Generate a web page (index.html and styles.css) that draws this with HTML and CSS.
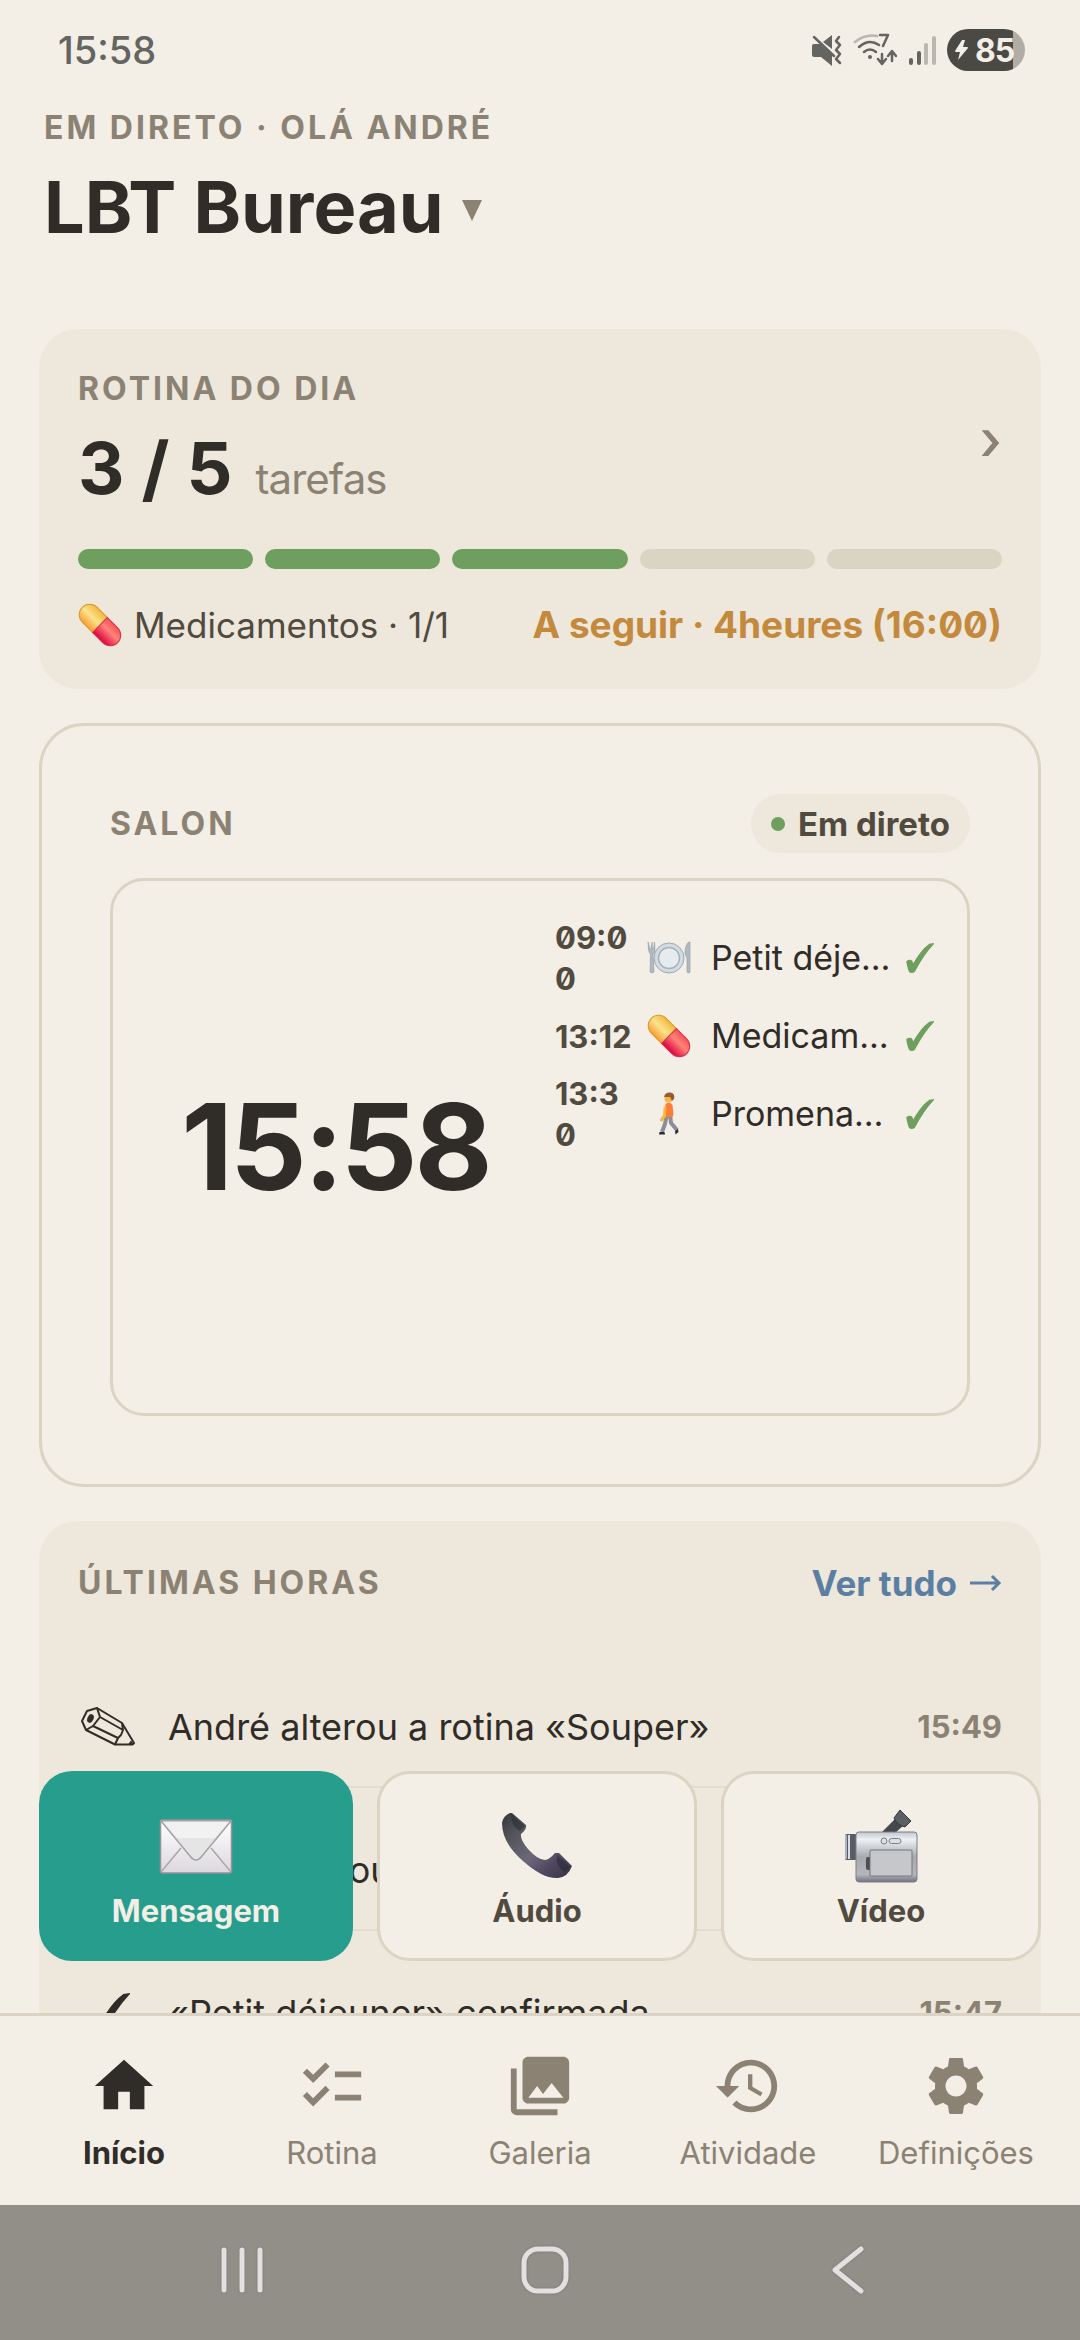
FILE: index.html
```html
<!DOCTYPE html>
<html lang="pt">
<head>
    <meta charset="UTF-8">
    <meta name="viewport" content="width=device-width, initial-scale=1.0">
    <title>LBT Bureau</title>
    <link rel="stylesheet" href="styles.css">
</head>
<body>
    <!-- Shared icons -->
    <svg class="defs" width="0" height="0" aria-hidden="true">
        <defs>
            <linearGradient id="pillYellow" x1="0" y1="0" x2="0" y2="1">
                <stop offset="0" stop-color="#f0b93a"/>
                <stop offset="0.5" stop-color="#fbe38c"/>
                <stop offset="1" stop-color="#fb9d35"/>
            </linearGradient>
            <linearGradient id="pillRed" x1="0" y1="0" x2="0" y2="1">
                <stop offset="0" stop-color="#f5555a"/>
                <stop offset="0.4" stop-color="#ff8378"/>
                <stop offset="1" stop-color="#dc0040"/>
            </linearGradient>
            <linearGradient id="metal" x1="0" y1="0" x2="0" y2="1">
                <stop offset="0" stop-color="#c3c6ca"/>
                <stop offset="0.15" stop-color="#eef1f4"/>
                <stop offset="0.5" stop-color="#a6a9ad"/>
                <stop offset="0.85" stop-color="#b4b6bb"/>
                <stop offset="1" stop-color="#70727e"/>
            </linearGradient>
            <linearGradient id="paper" x1="0" y1="0" x2="0" y2="1">
                <stop offset="0" stop-color="#ffffff"/>
                <stop offset="1" stop-color="#dcd8de"/>
            </linearGradient>
            <linearGradient id="handset" x1="0" y1="0" x2="1" y2="1">
                <stop offset="0" stop-color="#33373a"/>
                <stop offset="0.25" stop-color="#54565b"/>
                <stop offset="0.55" stop-color="#6b6778"/>
                <stop offset="0.75" stop-color="#514762"/>
                <stop offset="1" stop-color="#33343f"/>
            </linearGradient>
            <radialGradient id="plate">
                <stop offset="0" stop-color="#f1f4f6"/>
                <stop offset="1" stop-color="#cfd7dd"/>
            </radialGradient>
            <symbol id="pill" viewBox="0 0 44 44">
                <g transform="rotate(45 22 22)">
                    <path d="M22 11.500H7.500a10.500 10.500 0 0 0 0 21H22z" fill="url(#pillYellow)" stroke="#d99a2c" stroke-width="1"/>
                    <path d="M22 11.500h14.500a10.500 10.500 0 0 1 0 21H22z" fill="url(#pillRed)" stroke="#d9304a" stroke-width="1"/>
                </g>
            </symbol>
            <symbol id="check" viewBox="0 0 28 30">
                <path d="M1 18.500c2-1.500 4.500-1.200 5 .5l.8 3.500C11.500 14 17 6 23.500 1.500L27 1C19 9.500 13.500 18.500 8.500 28c-1 1.500-3.800 1.500-4.800.5C2.500 26 1.700 22.500 1 18.500z" fill="currentColor" stroke="currentColor" stroke-width="1.500"/>
            </symbol>
            <symbol id="pencil" viewBox="0 0 54 40">
                <g fill="none" stroke="currentColor" stroke-width="2" stroke-linejoin="round">
                    <path d="M6 4l10-3 25 15 12 20-1.500 1.500H34L5 23 1 14z"/>
                    <path d="M16 1l3 9-7 9-7 4M19 10l23 13M12 19l25 12-3 6.500M41 16l1 7-2 5-3 3"/>
                </g>
                <ellipse cx="9.500" cy="11.500" rx="3" ry="4.500" transform="rotate(25 9.500 11.500)" fill="currentColor"/>
                <path d="M53 37.500h-6l3-4z" fill="currentColor"/>
            </symbol>
        </defs>
    </svg>

    <div class="status-bar">
        <span class="status-time">15:58</span>
        <div class="status-icons">
            <svg width="32" height="32" viewBox="0 0 32 32">
                <path d="M1 12q0-2 2-2h6L21 21v11L10 23H3q-2 0-2-2zM12 8l9-7v14z" fill="#646460"/>
                <path d="M3 3l20 19" stroke="#646460" stroke-width="2.500" stroke-linecap="round"/>
                <path d="M28 3l-3 4 4 4-4 5 4 4-4 5 4 4" fill="none" stroke="#646460" stroke-width="2.500" stroke-linecap="round" stroke-linejoin="round"/>
            </svg>
            <svg width="44" height="34" viewBox="0 0 44 34">
                <g fill="none" stroke-width="2.500" stroke-linecap="round">
                    <path d="M2 9Q12 1 24 3" stroke="#b9b6af"/>
                    <path d="M6 14q10-9 20-2M11 19q6-5 12 0" stroke="#646460"/>
                    <path d="M27 2h8l-5 11M29 21v9m-4-4l4 5 4-5M39 28v-9m-4 4l4-5 4 5" stroke="#646460" stroke-linejoin="round"/>
                </g>
                <circle cx="17" cy="24" r="2" fill="#646460"/>
            </svg>
            <svg width="30" height="32" viewBox="0 0 30 32">
                <g stroke-width="4" stroke-linecap="round">
                    <path d="M4 26v3M12 19v10" stroke="#646460"/>
                    <path d="M19 11v18M27 4v25" stroke="#bab7b0"/>
                </g>
            </svg>
            <div class="battery">
                <svg width="16" height="22" viewBox="0 0 16 22"><path d="M8 1L1 12q0 1 1 1h4L4 21 14 9q0-1-1-1H9l2-7z" fill="#f3eee6"/></svg>
                <span>85</span>
            </div>
        </div>
    </div>

    <header class="page-header">
        <p class="eyebrow">EM DIRETO · OLÁ ANDRÉ</p>
        <button class="title-button">
            <h1>LBT Bureau</h1>
            <svg width="20" height="27" viewBox="0 0 20 27"><path d="M0 6h20L10 27z" fill="currentColor"/></svg>
        </button>
    </header>

    <main class="content">
        <section class="card routine">
            <div class="routine-head">
                <div>
                    <h2 class="eyebrow">ROTINA DO DIA</h2>
                    <p class="count">3 / 5 <span>tarefas</span></p>
                </div>
                <button class="chevron" aria-label="Abrir rotina">›</button>
            </div>
            <div class="segments">
                <span class="done"></span>
                <span class="done"></span>
                <span class="done"></span>
                <span></span>
                <span></span>
            </div>
            <div class="routine-meta">
                <span class="meds"><svg width="44" height="44"><use href="#pill"/></svg>Medicamentos · 1/1</span>
                <strong>A seguir · 4heures (16:00)</strong>
            </div>
        </section>

        <section class="room">
            <div class="room-head">
                <h2 class="eyebrow">SALON</h2>
                <span class="live">Em direto</span>
            </div>
            <div class="screen">
                <div class="clock">15:58</div>
                <ul class="tasks">
                    <li>
                        <time>09:00</time>
                        <svg width="44" height="44" viewBox="0 0 44 44">
                            <g fill="#aeb9c2" stroke="#8f9ca7" stroke-width="0.6">
                                <path d="M1 6l.5 8q.5 3 2 4L3 36q2 2 4 0L6 18q2-1 2-4L7.500 6l-1 7H5.500L5 6 4 13H3z"/>
                                <path d="M42 6q-4 2-4 12l2 4v14q2 2 3 0V6z"/>
                            </g>
                            <circle cx="22" cy="22" r="15" fill="url(#plate)" stroke="#9dabb5" stroke-width="1"/>
                            <circle cx="22" cy="22" r="10.500" fill="#e6ebee" stroke="#a6b3bd" stroke-width="1.500"/>
                        </svg>
                        <span class="task-name">Petit déje…</span>
                        <svg class="tick" width="28" height="30"><use href="#check"/></svg>
                    </li>
                    <li>
                        <time>13:12</time>
                        <svg width="44" height="44"><use href="#pill"/></svg>
                        <span class="task-name">Medicam…</span>
                        <svg class="tick" width="28" height="30"><use href="#check"/></svg>
                    </li>
                    <li>
                        <time>13:30</time>
                        <svg width="44" height="44" viewBox="0 0 44 44">
                            <path d="M20 22l-2 10-3 8M23 22l1 9 6 7" fill="none" stroke="#8b8d98" stroke-width="4"/>
                            <path d="M12.500 40h5l.5 2.500h-6zM28 39l3-2 .5 3-3 2.500z" fill="#2c2c30"/>
                            <path d="M18.500 12q4.500-3 7 1l1 9-1 3h-8z" fill="#fd7c38"/>
                            <path d="M18 16l-.5 8-3 4" fill="none" stroke="#f7b53b" stroke-width="3" stroke-linecap="round"/>
                            <circle cx="21.500" cy="6.500" r="4" fill="#f7b53b"/>
                            <path d="M17 5q1-5 6.500-4.500 5 1 3.500 6.500l-2 2-2-4z" fill="#9a5a33"/>
                        </svg>
                        <span class="task-name">Promena…</span>
                        <svg class="tick" width="28" height="30"><use href="#check"/></svg>
                    </li>
                </ul>
            </div>
        </section>

        <section class="card activity">
            <div class="activity-head">
                <h2 class="eyebrow">ÚLTIMAS HORAS</h2>
                <a href="#atividade">Ver tudo <svg width="32" height="18" viewBox="0 0 32 18"><path d="M0 9h29M22 2l7 7-7 7" fill="none" stroke="currentColor" stroke-width="3"/></svg></a>
            </div>
            <ul class="events">
                <li>
                    <svg width="62" height="40" viewBox="0 0 62 40"><use href="#pencil" x="3" width="54" height="40"/></svg>
                    <span>André alterou a rotina «Souper»</span>
                    <time>15:49</time>
                </li>
                <li>
                    <svg width="62" height="40" viewBox="0 0 62 40"><use href="#pencil" x="3" width="54" height="40"/></svg>
                    <span>Maria alterou a rotina</span>
                    <time>15:48</time>
                </li>
                <li>
                    <svg width="62" height="40" viewBox="0 0 62 40"><use href="#check" x="14" width="38" height="40"/></svg>
                    <span>«Petit déjeuner» confirmada</span>
                    <time>15:47</time>
                </li>
            </ul>
        </section>

        <!-- Quick actions float above the feed -->
        <div class="actions">
            <button class="action primary">
                <svg width="74" height="74" viewBox="0 0 74 74">
                    <rect x="1.500" y="11" width="71" height="53" rx="2" fill="url(#paper)" stroke="#96919a" stroke-width="1.500"/>
                    <path d="M2 63l20-24M72 63L52 39" stroke="#aaa6ad" stroke-width="1.500"/>
                    <path d="M2 12l29 35q6 8 12 0l29-35z" fill="#e6e5e6" stroke="#a5a2a7" stroke-width="1.500"/>
                    <path d="M4 12.500h66L56 29H18z" fill="#fff" opacity="0.5"/>
                </svg>
                Mensagem
            </button>
            <button class="action">
                <svg width="74" height="74" viewBox="0 0 74 74">
                    <path d="M2 14Q3 7 10 4l2 0 14 12q1 4-5 9-1 6 7 15 10 11 17 11 4 0 10-7l4 0 13 13q-4 11-14 12-15 1-35-17Q2 34 2 14z" fill="url(#handset)"/>
                    <path d="M11 5l14 12-5 5Q11 18 11 5zM57 46l13 12-5 5q-10-5-8-17z" fill="#24262c" opacity="0.5"/>
                </svg>
                Áudio
            </button>
            <button class="action">
                <svg width="74" height="74" viewBox="0 0 74 74">
                    <path d="M38 23l14-14 8 7-9 8z" fill="#45484c"/>
                    <path d="M50 9l6-8 11 11-6 6q-8-2-11-9z" fill="#5c5f64" stroke="#35373b" stroke-width="1"/>
                    <rect x="1" y="25" width="12" height="26" rx="1.500" fill="#595c62"/>
                    <path d="M1 26h2v24H1z" fill="#aab4c0"/>
                    <path d="M4 26h2v24H4z" fill="#d9dee3"/>
                    <rect x="12" y="23" width="61" height="50" rx="3" fill="url(#metal)" stroke="#7c7f87" stroke-width="1"/>
                    <circle cx="40" cy="32" r="3" fill="#dde0e3" stroke="#7c7f87" stroke-width="1"/>
                    <rect x="45" y="29.500" width="12" height="5" rx="2.500" fill="#dde0e3" stroke="#7c7f87" stroke-width="1"/>
                    <rect x="22" y="48" width="5" height="13" rx="2" fill="#4b4d52"/>
                    <rect x="26" y="41" width="42" height="26" rx="1" fill="#c6c7ca" stroke="#74767c" stroke-width="1"/>
                </svg>
                Vídeo
            </button>
        </div>
    </main>

    <nav class="tabs">
        <a href="#inicio" class="active">
            <svg viewBox="0 0 24 24"><path d="M10 20v-6h4v6h5v-8h3L12 3 2 12h3v8z"/></svg>
            Início
        </a>
        <a href="#rotina">
            <svg viewBox="0 0 24 24"><path d="M22 7h-9v2h9V7zm0 8h-9v2h9v-2zM5.540 11L2 7.460l1.410-1.410 2.120 2.120 4.240-4.240 1.410 1.410L5.540 11zm0 8L2 15.460l1.410-1.410 2.120 2.120 4.240-4.240 1.410 1.410L5.540 19z"/></svg>
            Rotina
        </a>
        <a href="#galeria">
            <svg viewBox="0 0 24 24"><path d="M22 16V4c0-1.100-.9-2-2-2H8c-1.100 0-2 .9-2 2v12c0 1.100.9 2 2 2h12c1.100 0 2-.9 2-2zm-11-4l2.030 2.710L16 11l4 5H8l3-4zM2 6v14c0 1.100.9 2 2 2h14v-2H4V6H2z"/></svg>
            Galeria
        </a>
        <a href="#atividade">
            <svg viewBox="0 0 24 24"><path d="M13 3c-4.970 0-9 4.030-9 9H1l3.890 3.890.07.14L9 12H6c0-3.870 3.130-7 7-7s7 3.130 7 7-3.130 7-7 7c-1.930 0-3.680-.79-4.940-2.060l-1.420 1.420C8.270 19.990 10.510 21 13 21c4.970 0 9-4.030 9-9s-4.030-9-9-9zm-1 5v5l4.280 2.540.72-1.210-3.500-2.080V8H12z"/></svg>
            Atividade
        </a>
        <a href="#definicoes">
            <svg viewBox="0 0 24 24"><path d="M19.140 12.940c.04-.3.060-.61.060-.94 0-.32-.02-.64-.07-.94l2.030-1.580c.18-.14.23-.41.12-.61l-1.920-3.320c-.12-.22-.37-.29-.59-.22l-2.390.96c-.5-.38-1.030-.7-1.620-.94l-.36-2.540c-.04-.24-.24-.41-.48-.41h-3.840c-.24 0-.43.17-.47.41l-.36 2.540c-.59.24-1.130.57-1.620.94l-2.390-.96c-.22-.08-.47 0-.59.22L2.740 8.870c-.12.21-.08.47.12.61l2.030 1.580c-.05.3-.09.63-.09.94s.02.64.07.94l-2.030 1.580c-.18.14-.23.41-.12.61l1.920 3.320c.12.22.37.29.59.22l2.390-.96c.5.38 1.030.7 1.620.94l.36 2.540c.05.24.24.41.48.41h3.840c.24 0 .44-.17.47-.41l.36-2.540c.59-.24 1.130-.56 1.620-.94l2.390.96c.22.08.47 0 .59-.22l1.920-3.320c.12-.22.07-.47-.12-.61l-2.010-1.580zM12 15.600c-1.980 0-3.600-1.620-3.600-3.600s1.620-3.600 3.600-3.600 3.600 1.620 3.600 3.600-1.620 3.600-3.600 3.600z"/></svg>
            Definições
        </a>
    </nav>

    <div class="system-nav">
        <button aria-label="Recentes"><svg width="52" height="52" viewBox="0 0 52 52"><path d="M8 5v40M26 5v40M44 5v40"/></svg></button>
        <button aria-label="Ecrã inicial"><svg width="52" height="52" viewBox="0 0 52 52"><rect x="5" y="4" width="42" height="42" rx="14"/></svg></button>
        <button aria-label="Voltar"><svg width="52" height="52" viewBox="0 0 52 52"><path d="M39 4L13 25l26 21"/></svg></button>
    </div>
</body>
</html>
```

FILE: styles.css
```css
* {
    box-sizing: border-box;
}

body {
    display: flex;
    flex-direction: column;
    height: 100vh;
    margin: 0;
    overflow: hidden;
    font-family: Inter, Roboto, sans-serif;
    background-color: #f3eee6;
    color: #302c27;
}

h1, h2, p, ul {
    margin: 0;
    padding: 0;
}

ul {
    list-style: none;
}

button {
    padding: 0;
    border: none;
    background: none;
    font-family: inherit;
    color: inherit;
    cursor: pointer;
}

a {
    text-decoration: none;
}

svg {
    flex-shrink: 0;
}

.defs {
    position: absolute;
}

.eyebrow {
    font-size: 32px;
    line-height: 40px;
    font-weight: 700;
    letter-spacing: 3px;
    color: #8b8274;
}

/* Phone status bar */
.status-bar {
    display: flex;
    flex-shrink: 0;
    align-items: center;
    justify-content: space-between;
    height: 100px;
    padding: 0 55px 0 58px;
}

.status-time {
    font-size: 38px;
    font-weight: 500;
    color: #646460;
}

.status-icons {
    display: flex;
    align-items: center;
    gap: 10px;
}

.battery {
    display: flex;
    align-items: center;
    gap: 5px;
    width: 78px;
    height: 42px;
    padding-left: 7px;
    border-radius: 21px;
    background: linear-gradient(90deg, #4a4944 85%, #b0ada6 85%);
    font-size: 32px;
    font-weight: 700;
    letter-spacing: -1px;
    color: #f3eee6;
}

.page-header {
    flex-shrink: 0;
    padding: 8px 44px 80px;
}

.title-button {
    display: flex;
    align-items: center;
    gap: 18px;
    margin-top: 17px;
    color: #8b8274;
}

h1 {
    font-size: 72px;
    line-height: 84px;
    font-weight: 700;
    color: #302c27;
}

.content {
    position: relative;
    display: flex;
    flex: 1;
    flex-direction: column;
    gap: 34px;
    min-height: 0;
    padding: 0 39px;
    overflow: hidden;
}

.card {
    flex-shrink: 0;
    padding: 40px 39px;
    border-radius: 39px;
    background-color: #eee7db;
}

/* Routine summary */
.routine-head {
    display: flex;
    align-items: center;
    justify-content: space-between;
}

.count {
    margin-top: 17px;
    font-size: 72px;
    line-height: 84px;
    font-weight: 700;
}

.count span {
    margin-left: 6px;
    font-size: 42px;
    line-height: 42px;
    font-weight: 400;
    letter-spacing: -1px;
    color: #8b8274;
}

.chevron {
    font-size: 56px;
    font-weight: 500;
    color: #8b8274;
}

.segments {
    display: flex;
    gap: 12px;
    margin: 39px 0 32px;
}

.segments span {
    flex: 1;
    height: 20px;
    border-radius: 10px;
    background-color: #dbd4c4;
}

.segments .done {
    background-color: #6e9f5e;
}

.routine-meta {
    display: flex;
    justify-content: space-between;
    font-size: 35px;
    line-height: 48px;
    color: #504a3f;
    white-space: nowrap;
}

.routine-meta strong {
    font-size: 37px;
    color: #c3893c;
    font-feature-settings: "zero";
}

.meds {
    display: flex;
    align-items: center;
    gap: 12px;
}

/* Room screen */
.room {
    flex-shrink: 0;
    padding: 68px;
    border: 3px solid #dbd3c3;
    border-radius: 45px;
}

.room-head {
    display: flex;
    align-items: center;
    justify-content: space-between;
    margin-bottom: 25px;
}

.live {
    display: flex;
    align-items: center;
    gap: 13px;
    height: 59px;
    padding: 0 20px;
    border-radius: 30px;
    background-color: #eee7db;
    font-size: 33px;
    font-weight: 700;
    color: #504a3f;
}

.live::before {
    content: "";
    width: 14px;
    height: 14px;
    border-radius: 50%;
    background-color: #6e9f5e;
}

.screen {
    display: grid;
    grid-template-columns: 1fr 1fr;
    gap: 30px;
    aspect-ratio: 8 / 5;
    padding: 36px 33px;
    border: 3px solid #dbd3c3;
    border-radius: 34px;
}

.clock {
    align-self: center;
    text-align: center;
    font-size: 120px;
    font-weight: 700;
    letter-spacing: -3px;
}

.tasks {
    display: flex;
    flex-direction: column;
    gap: 12px;
    min-width: 0;
}

.tasks li {
    display: flex;
    align-items: center;
    min-height: 50px;
}

.tasks time {
    width: 79px;
    margin-right: 13px;
    font-size: 31px;
    line-height: 41px;
    font-weight: 700;
    font-feature-settings: "zero";
    word-break: break-all;
    color: #504a3f;
}

.task-name {
    flex: 1;
    margin-left: 20px;
    font-size: 34px;
    line-height: 48px;
    white-space: nowrap;
}

.tick {
    color: #6e9f5e;
}

/* Activity feed */
.activity-head {
    display: flex;
    align-items: center;
    justify-content: space-between;
    height: 44px;
    margin-bottom: 40px;
}

.activity-head a {
    display: flex;
    align-items: center;
    gap: 13px;
    font-size: 35px;
    font-weight: 700;
    color: #5b7fa3;
}

.events li {
    display: flex;
    align-items: center;
    gap: 28px;
    padding: 58px 0 35px;
    border-bottom: 2px solid #e4dccf;
    font-size: 36px;
    line-height: 48px;
}

.events span {
    flex: 1;
}

.events time {
    font-size: 31px;
    font-weight: 700;
    color: #8b8274;
}

.actions {
    position: absolute;
    left: 39px;
    right: 39px;
    bottom: 52px;
    display: flex;
    gap: 24px;
}

.action {
    display: flex;
    flex: 1 1 0;
    flex-direction: column;
    align-items: center;
    justify-content: center;
    gap: 8px;
    height: 190px;
    padding-top: 8px;
    border: 3px solid #dbd3c3;
    border-radius: 33px;
    background-color: #f3eee6;
    font-size: 31px;
    line-height: 40px;
    font-weight: 700;
    color: #504a3f;
}

.action.primary {
    border: none;
    background-color: #279e8d;
    color: #f3eee6;
}

/* Bottom tabs */
.tabs {
    display: flex;
    flex-shrink: 0;
    height: 192px;
    padding: 35px 20px 0;
    border-top: 3px solid #dbd4c4;
}

.tabs a {
    display: flex;
    flex: 1;
    flex-direction: column;
    align-items: center;
    gap: 12px;
    font-size: 31px;
    line-height: 40px;
    color: #8b8274;
}

.tabs svg {
    width: 70px;
    height: 70px;
    fill: currentColor;
}

.tabs .active {
    font-weight: 700;
    color: #302c27;
}

.system-nav {
    display: flex;
    flex-shrink: 0;
    align-items: center;
    justify-content: center;
    gap: 251px;
    height: 135px;
    padding: 0 0 4px 9px;
    background-color: #928e88;
}

.system-nav svg {
    display: block;
    fill: none;
    stroke: #e2e1e0;
    stroke-width: 5px;
    stroke-linecap: round;
    stroke-linejoin: round;
    filter: drop-shadow(0 0 1px #77746f);
}
```
